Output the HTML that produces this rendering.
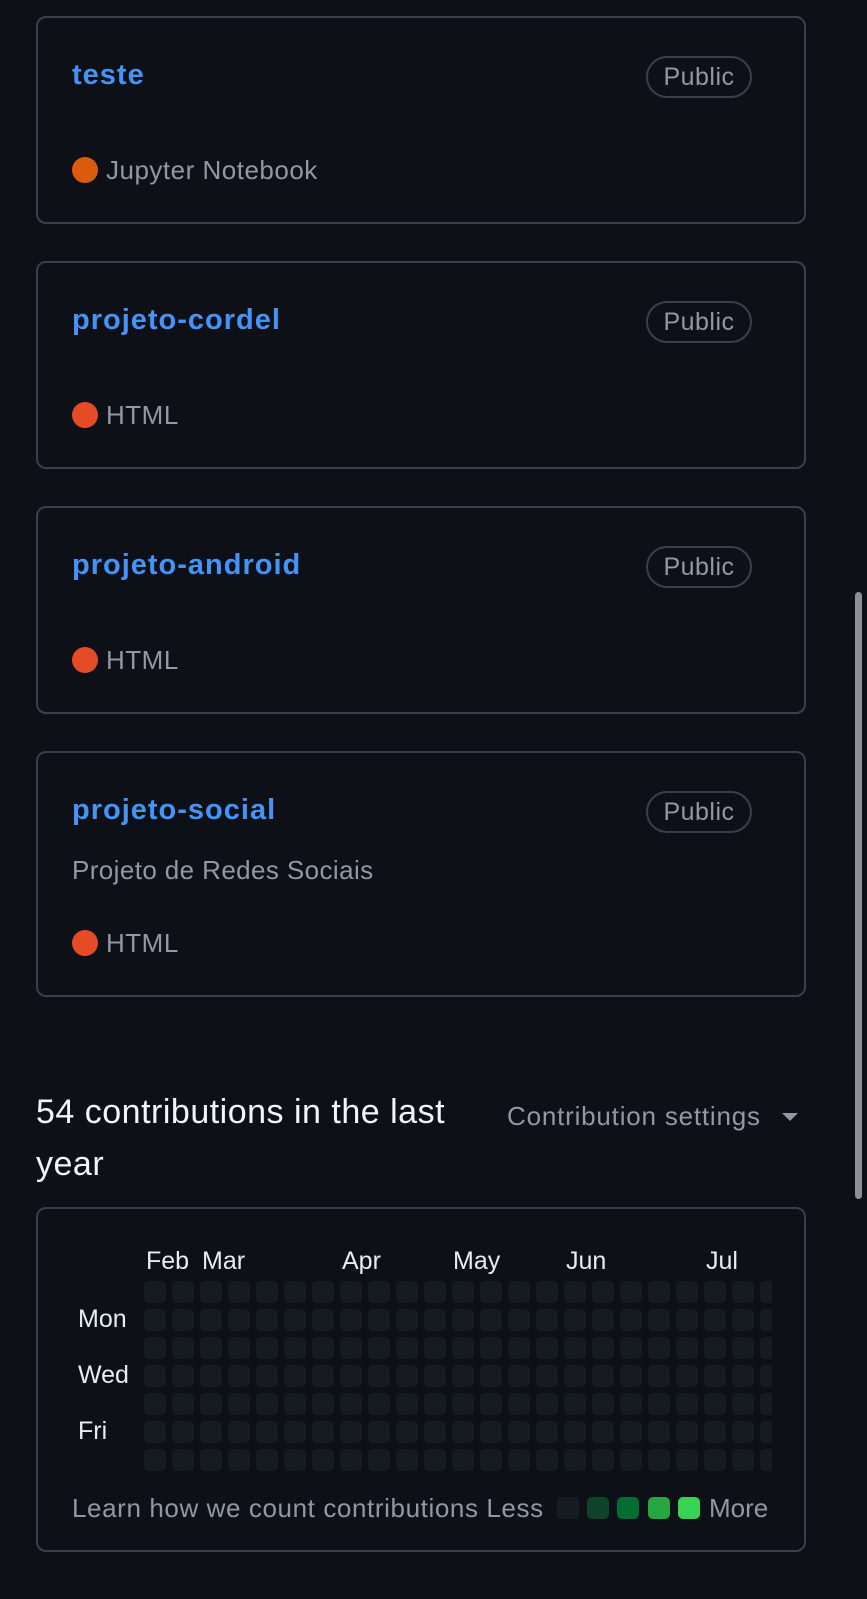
<!DOCTYPE html>
<html><head><meta charset="utf-8"><style>
*{margin:0;padding:0;box-sizing:border-box}
body{width:867px;height:1599px;background:#0d1117;font-family:"Liberation Sans",sans-serif;position:relative;overflow:hidden}
.card{position:absolute;left:36px;width:770px;border:2px solid #3a4049;border-radius:10px}
.t{position:absolute;left:34px;top:39px;font-size:29px;font-weight:bold;color:#4493f8;line-height:36px;letter-spacing:1px}
.b{position:absolute;left:608px;top:38px;width:106px;height:42px;border:2px solid #3a4049;border-radius:21px;color:#9198a1;font-size:25px;line-height:38px;text-align:center;letter-spacing:.5px}
.l{position:absolute;left:34px;font-size:26px;color:#9198a1;line-height:30px;padding-left:34px;letter-spacing:.5px}
.l i{position:absolute;left:0;top:2px;width:26px;height:26px;border-radius:50%}
.d{position:absolute;left:34px;font-size:26px;color:#9198a1;line-height:30px;letter-spacing:.4px}
.g{position:absolute;width:22px;height:22px;border-radius:5px;background:#161b22}
.w{position:absolute;color:#e6edf3;font-size:25px;line-height:28px}
</style></head><body>
<div class="card" style="top:16px;height:208px"><div class="t">teste</div><div class="b">Public</div><div class="l" style="top:137px"><i style="background:#da5b0b"></i>Jupyter Notebook</div></div>
<div class="card" style="top:261px;height:208px"><div class="t">projeto-cordel</div><div class="b">Public</div><div class="l" style="top:137px"><i style="background:#e34c26"></i>HTML</div></div>
<div class="card" style="top:506px;height:208px"><div class="t">projeto-android</div><div class="b">Public</div><div class="l" style="top:137px"><i style="background:#e34c26"></i>HTML</div></div>
<div class="card" style="top:751px;height:246px"><div class="t">projeto-social</div><div class="b">Public</div><div class="d" style="top:102px">Projeto de Redes Sociais</div><div class="l" style="top:175px"><i style="background:#e34c26"></i>HTML</div></div>
<div style="position:absolute;left:36px;top:1086px;font-size:34px;line-height:52px;color:#f0f6fc;width:470px;letter-spacing:.5px">54 contributions in the last year</div>
<div style="position:absolute;left:507px;top:1101px;font-size:26px;color:#9198a1;line-height:30px;letter-spacing:.8px">Contribution settings</div>
<div style="position:absolute;left:782px;top:1113px;width:0;height:0;border-left:8px solid transparent;border-right:8px solid transparent;border-top:8px solid #9198a1"></div>
<div style="position:absolute;left:855px;top:592px;width:7px;height:607px;border-radius:4px;background:#8b8f96"></div>
<div class="card" style="top:1207px;height:345px;overflow:hidden">
<div style="position:absolute;left:106px;top:72px;width:628px;height:196px;overflow:hidden" id="grid"></div>
<div class="w" style="left:108px;top:38px">Feb</div><div class="w" style="left:164px;top:38px">Mar</div><div class="w" style="left:304px;top:38px">Apr</div><div class="w" style="left:415px;top:38px">May</div><div class="w" style="left:528px;top:38px">Jun</div><div class="w" style="left:668px;top:38px">Jul</div>
<div class="w" style="left:40px;top:96px">Mon</div><div class="w" style="left:40px;top:152px">Wed</div><div class="w" style="left:40px;top:208px">Fri</div>
<div style="position:absolute;left:34px;top:284px;font-size:26px;color:#9198a1;line-height:30px;letter-spacing:.6px">Learn how we count contributions Less</div>
<div class="g" style="left:519px;top:288px"></div>
<div class="g" style="left:549px;top:288px;background:#0e4429"></div>
<div class="g" style="left:579px;top:288px;background:#006d32"></div>
<div class="g" style="left:610px;top:288px;background:#26a641"></div>
<div class="g" style="left:640px;top:288px;background:#39d353"></div>
<div style="position:absolute;left:671px;top:284px;font-size:26px;color:#9198a1;line-height:30px">More</div>
</div>
<script>
var g=document.getElementById('grid'),h='';
for(var c=0;c<23;c++)for(var r=0;r<7;r++)h+='<div class="g" style="left:'+(c*28)+'px;top:'+(r*28)+'px"></div>';
g.innerHTML=h;
</script>
</body></html>
